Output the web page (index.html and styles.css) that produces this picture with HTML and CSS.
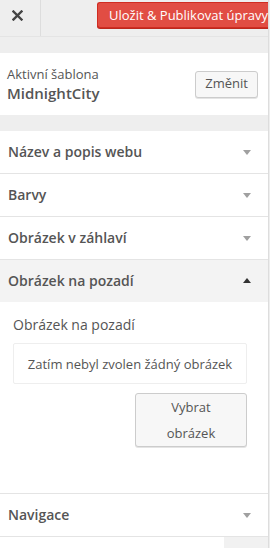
FILE: index.html
```html
<!DOCTYPE html>
<html lang="cs">

<head>
    <meta charset="UTF-8">
    <meta name="viewport" content="width=device-width, initial-scale=1.0">
    <title>Přizpůsobit</title>
    <link rel="stylesheet" href="styles.css">
</head>

<body>
    <div class="panel">
        <div class="topbar">
            <a class="close" href="#">
                <svg width="11" height="11" viewBox="0 0 11 11">
                    <path d="M1.5 1.5 L9.5 9.5 M9.5 1.5 L1.5 9.5" stroke="#444" stroke-width="2.4" stroke-linecap="square" />
                </svg>
            </a>
            <button class="save">Uložit &amp; Publikovat úpravy</button>
        </div>

        <div class="theme">
            <div class="theme-info">
                <span class="theme-label">Aktivní šablona</span>
                <strong class="theme-name">MidnightCity</strong>
            </div>
            <button class="btn">Změnit</button>
        </div>

        <ul class="sections">
            <li class="section">
                <h3 class="section-title">Název a popis webu</h3>
            </li>
            <li class="section">
                <h3 class="section-title">Barvy</h3>
            </li>
            <li class="section">
                <h3 class="section-title">Obrázek v záhlaví</h3>
            </li>
            <li class="section open">
                <h3 class="section-title">Obrázek na pozadí</h3>
                <div class="section-body">
                    <span class="field-label">Obrázek na pozadí</span>
                    <div class="placeholder">Zatím nebyl zvolen žádný obrázek</div>
                    <div class="actions">
                        <button class="btn btn-tall">Vybrat obrázek</button>
                    </div>
                </div>
            </li>
            <li class="section">
                <h3 class="section-title">Navigace</h3>
            </li>
            <li class="section-last">
                <div class="stub"></div>
            </li>
        </ul>
    </div>
</body>

</html>
```

FILE: styles.css
```css
* {
    margin: 0;
    padding: 0;
    box-sizing: border-box;
}

body {
    font-family: "Open Sans", "Liberation Sans", sans-serif;
    color: #555;
    background-color: #eee;
}

.panel {
    width: 269px;
    min-height: 548px;
    border-right: 1px solid #ddd;
    background-color: #eee;
}

.topbar {
    display: flex;
    align-items: flex-start;
    height: 37px;
    border-bottom: 1px solid #e4e4e4;
}

.close {
    display: flex;
    justify-content: center;
    align-items: center;
    width: 41px;
    height: 36px;
    padding: 0 6px 6px 0;
    border-right: 1px solid #ddd;
}

.save {
    margin: 2px 0 0 56px;
    flex: 1;
    height: 26px;
    padding: 0 0 1px 11px;
    text-align: left;
    white-space: nowrap;
    font-family: inherit;
    font-size: 13px;
    color: #fff;
    background-color: #e14d43;
    border: 1px solid #d02c21;
    border-right: 0;
    border-radius: 3px 0 0 3px;
    box-shadow: 0 1px 0 #ba281e;
}

.theme {
    display: flex;
    justify-content: space-between;
    align-items: center;
    margin-top: 16px;
    height: 62px;
    padding: 0 10px 0 7px;
    background-color: #fff;
}

.theme-info {
    display: flex;
    flex-direction: column;
}

.theme-label {
    font-size: 13px;
    line-height: 18px;
}

.theme-name {
    font-size: 15px;
    font-weight: 600;
    line-height: 20px;
}

.btn {
    font-family: inherit;
    font-size: 13px;
    color: #555;
    background-color: #f7f7f7;
    border: 1px solid #ccc;
    border-radius: 3px;
    box-shadow: 0 1px 0 #e4e4e4;
    height: 27px;
    padding: 0 9px 2px;
}

.sections {
    list-style: none;
    margin-top: 16px;
    background-color: #fff;
}

.section {
    border-bottom: 1px solid #e4e4e4;
}

.section-title {
    position: relative;
    height: 42px;
    line-height: 42px;
    padding-left: 8px;
    font-size: 14px;
    font-weight: 600;
    color: #555;
}

.section-title::after {
    content: "";
    position: absolute;
    right: 17px;
    top: 19px;
    border-left: 4px solid transparent;
    border-right: 4px solid transparent;
    border-top: 5px solid #a0a0a0;
}

.open .section-title {
    background-color: #f3f3f3;
}

.open .section-title::after {
    top: 18px;
    border-top: 0;
    border-bottom: 5px solid #333;
}

.section-body {
    height: 191px;
    padding: 12px 21px 0 13px;
}

.field-label {
    display: block;
    font-size: 14px;
    line-height: 22px;
    margin-bottom: 7px;
}

.placeholder {
    height: 41px;
    line-height: 40px;
    text-align: center;
    font-size: 13px;
    border: 1px solid #eee;
    border-radius: 2px;
}

.actions {
    display: flex;
    justify-content: flex-end;
    margin-top: 9px;
}

.btn-tall {
    width: 112px;
    height: 54px;
    line-height: 26px;
    padding: 0 22px 2px;
}

.section-last {
    display: flex;
    justify-content: flex-end;
    height: 12px;
}

.stub {
    width: 44px;
    background-color: #f1f1f1;
}
```
